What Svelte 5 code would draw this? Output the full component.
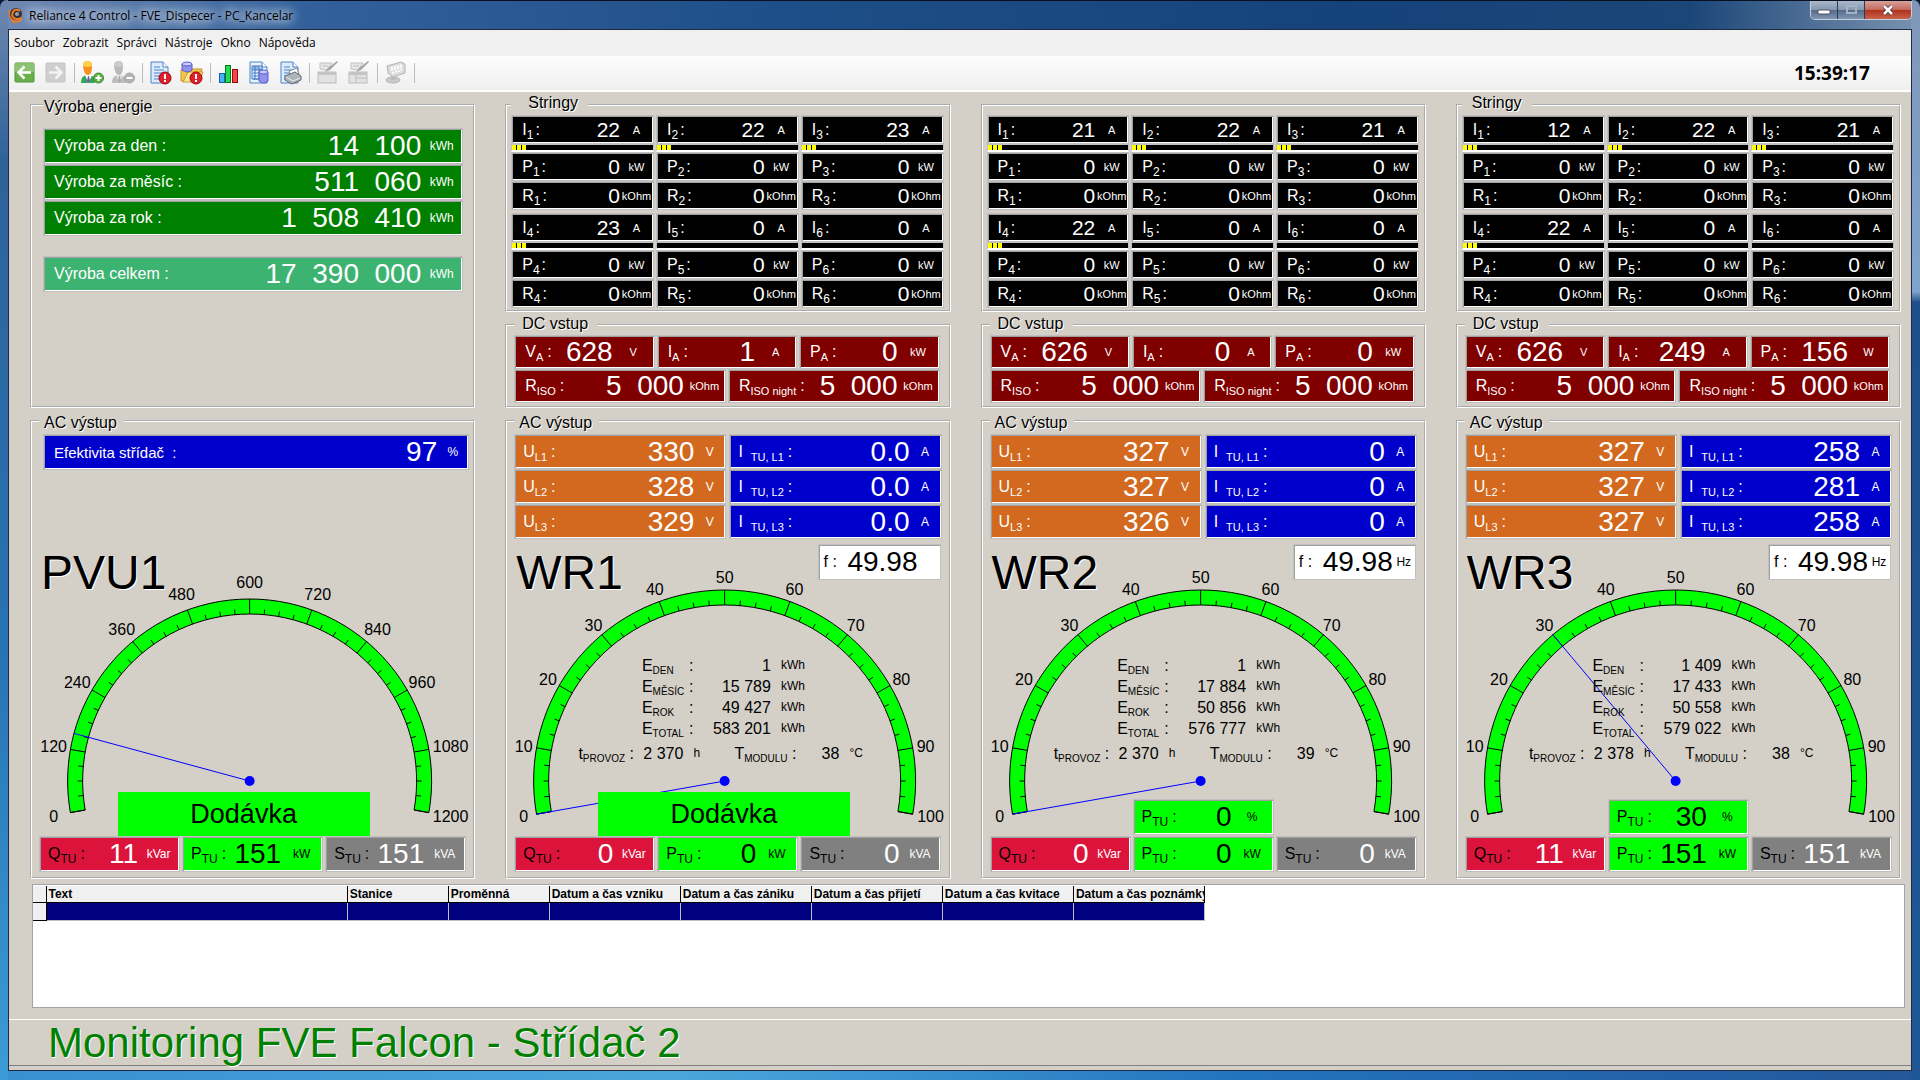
<script lang="ts">
  type Cell = { label: string; sub?: string; value: string; unit: string };

  const menu = ["Soubor", "Zobrazit", "Správci", "Nástroje", "Okno", "Nápověda"];

  const toolbar = [
    { icon: "back", title: "Zpět" },
    { icon: "forward", title: "Vpřed" },
    { icon: "sep" },
    { icon: "login", title: "Přihlásit" },
    { icon: "logout", title: "Odhlásit" },
    { icon: "sep" },
    { icon: "alarms", title: "Aktuální alarmy" },
    { icon: "alarmdb", title: "Historické alarmy" },
    { icon: "sep" },
    { icon: "chart", title: "Grafy" },
    { icon: "table", title: "Tabulky" },
    { icon: "print", title: "Tisk" },
    { icon: "sep" },
    { icon: "edit", title: "Upravit okno" },
    { icon: "edit2", title: "Upravit objekt" },
    { icon: "sep" },
    { icon: "keyboard", title: "Klávesnice" },
    { icon: "sep" },
  ];

  const energy: Cell[] = [
    { label: "Výroba za den :", value: "14 100", unit: "kWh" },
    { label: "Výroba za měsíc :", value: "511 060", unit: "kWh" },
    { label: "Výroba za rok :", value: "1 508 410", unit: "kWh" },
  ];

  const inverters = [
    {
      name: "WR1",
      title: "Stringy",
      indent: true,
      strings: [22, 22, 23, 23, 0, 0],
      dc: [["628", "V"], ["1", "A"], ["0", "kW"]],
      u: ["330", "328", "329"],
      i: ["0.0", "0.0", "0.0"],
      fUnit: "",
      energy: ["1", "15 789", "49 427", "583 201"],
      hours: "2 370",
      temp: "38",
      percent: 0,
      delivery: true,
      q: "0",
      p: "0",
      s: "0",
    },
    {
      name: "WR2",
      title: "",
      indent: false,
      strings: [21, 22, 21, 22, 0, 0],
      dc: [["626", "V"], ["0", "A"], ["0", "kW"]],
      u: ["327", "327", "326"],
      i: ["0", "0", "0"],
      fUnit: "Hz",
      energy: ["1", "17 884", "50 856", "576 777"],
      hours: "2 370",
      temp: "39",
      percent: 0,
      delivery: false,
      q: "0",
      p: "0",
      s: "0",
    },
    {
      name: "WR3",
      title: "Stringy",
      indent: false,
      strings: [12, 22, 21, 22, 0, 0],
      dc: [["626", "V"], ["249", "A"], ["156", "W"]],
      u: ["327", "327", "327"],
      i: ["258", "281", "258"],
      fUnit: "Hz",
      energy: ["1 409", "17 433", "50 558", "579 022"],
      hours: "2 378",
      temp: "38",
      percent: 30,
      delivery: false,
      q: "11",
      p: "151",
      s: "151",
    },
  ];

  const energyNames = ["DEN", "MĚSÍC", "ROK", "TOTAL"];
  const dcNames = ["V", "I", "P"];

  const columns = [
    "Text",
    "Stanice",
    "Proměnná",
    "Datum a čas vzniku",
    "Datum a čas zániku",
    "Datum a čas přijetí",
    "Datum a čas kvitace",
    "Datum a čas poznámky",
  ];

  // the scale spans 200 degrees, starting 10 degrees below the horizontal
  function polar(r: number, t: number) {
    const a = ((190 - t * 200) * Math.PI) / 180;
    return { x: r * Math.cos(a), y: -r * Math.sin(a) };
  }

  function band(outer: number, inner: number) {
    const a = polar(outer, 0);
    const b = polar(outer, 1);
    const c = polar(inner, 1);
    const d = polar(inner, 0);
    return `M${a.x} ${a.y} A${outer} ${outer} 0 1 1 ${b.x} ${b.y} L${c.x} ${c.y} A${inner} ${inner} 0 1 0 ${d.x} ${d.y} Z`;
  }

  function ticks(outer: number, inner: number) {
    return Array.from({ length: 41 }, (_, i) => ({
      a: polar(inner, i / 40),
      b: polar(i % 4 === 0 ? outer : inner + 5, i / 40),
    }));
  }

  function scale(r: number, max: number) {
    return Array.from({ length: 11 }, (_, i) => {
      const text = String((max / 10) * i);
      const long = i > 8 && text.length > 2;
      const p = polar(r, i / 10);
      return { text, x: long ? p.x + 5 : p.x, y: p.y + 6 };
    });
  }

  // a group gap is one digit wide
  function lcd(value: string) {
    return value.replaceAll(" ", "  ");
  }
</script>

{#snippet readout(label, sub, value, unit, cls)}
  <div class="readout {cls}">
    <span class="label">{label}{#if sub}<sub>{sub}</sub><span class="colon">:</span>{/if}</span>
    <span class="value">{lcd(value)}</span>
    <span class="unit">{unit}</span>
  </div>
{/snippet}

{#snippet gauge(outer, labelRadius, max, value)}
  {@const tip = polar(outer, value / max)}
  <svg class="gauge" viewBox="-207 -242 420 297">
    <path d={band(outer, outer - 15)} fill="#00ff00" stroke="#000" />
    {#each ticks(outer, outer - 15) as t}
      <line x1={t.a.x} y1={t.a.y} x2={t.b.x} y2={t.b.y} stroke="#000" />
    {/each}
    {#each scale(labelRadius, max) as l}
      <text x={l.x} y={l.y} text-anchor="middle">{l.text}</text>
    {/each}
    <line x1="0" y1="0" x2={tip.x} y2={tip.y} stroke="#0000ff" />
    <circle r="5" fill="#0000ff" />
  </svg>
{/snippet}

{#snippet power(q, p, s)}
  <div class="three power">
    {@render readout("Q", "TU", q, "kVar", "crimson")}
    {@render readout("P", "TU", p, "kW", "lime")}
    {@render readout("S", "TU", s, "kVA", "gray")}
  </div>
{/snippet}

{#snippet sheet(fill, line)}
  <path d="M2 1h12l5 5v16H2z" fill={fill} stroke={line} />
  <path d="M14 1v5h5" fill="#fff" stroke={line} />
  <path d="M5 6h6M5 9h10M5 12h10M5 15h8M5 18h8" stroke={line} />
{/snippet}

{#snippet alert()}
  <circle cx="16" cy="17" r="6" fill="#e0202a" stroke="#a8000c" />
  <path d="M16 13v5" stroke="#fff" stroke-width="2" />
  <path d="M16 19v2" stroke="#fff" stroke-width="2" />
{/snippet}

{#snippet drum(x, y, w, h)}
  <path d="M{x} {y}v{h}q{w / 2} 4 {w} 0v-{h}z" fill="#8f93ee" stroke="#5a5ec8" />
  <ellipse cx={x + w / 2} cy={y} rx={w / 2} ry="2" fill="#c9cbff" stroke="#5a5ec8" />
{/snippet}

{#snippet icon(name)}
  <svg class="icon" width="24" height="24" viewBox="0 0 24 24" fill="none">
    {#if name === "back"}
      <rect x="2" y="2" width="19" height="19" rx="1" fill="#6cb04c" stroke="#4f9438" />
      <path d="M2 2h19v9H2z" fill="#9ccb85" opacity=".7" />
      <path d="M18 11.5H6M11.5 5.5l-6 6 6 6" stroke="#fff" stroke-width="2.5" />
    {:else if name === "forward"}
      <rect x="2" y="2" width="19" height="19" rx="1" fill="#cfcfcf" stroke="#c4c4c4" />
      <path d="M5 11.5h12M11.5 5.5l6 6-6 6" stroke="#f4f4f4" stroke-width="2.5" />
    {:else if name === "login" || name === "logout"}
      {@const on = name === "login"}
      <path d="M0 22c0-6 3-8 7-8s7 2 7 8z" fill={on ? "#33a852" : "#bdbdbd"} />
      <path d="M4 14l3.5 8 3.5-8z" fill={on ? "#fff" : "#e4e4e4"} />
      <path d="M7 15l-1 5 1.500 2 1.500-2-1-5z" fill={on ? "#7a52b8" : "#a8a8a8"} />
      <path d="M2 5q0-5 4.5-5T11 5q0 9-4 9T2 5z" fill={on ? "#f9901b" : "#b9b9b9"} />
      <path d="M2 5q0-5 4.5-5T11 5q-4 2-9 0z" fill={on ? "#ffd04a" : "#cbcbcb"} />
      <circle cx="17.5" cy="17" r="5" fill={on ? "#5cae45" : "#b2b2b2"} stroke={on ? "#3d8a2b" : "#a5a5a5"} />
      <path d={on ? "M14.500 17h6M17.500 14v6" : "M14.500 17h6"} stroke="#fff" stroke-width="2" />
    {:else if name === "alarms"}
      {@render sheet("#dceafb", "#4a84c4")}
      {@render alert()}
    {:else if name === "alarmdb"}
      <path d="M1 20V9l4-1 1-2h5l1 2h10l-3 13z" fill="#f1c64e" stroke="#c9962a" />
      <path d="M3 21l5-10h15l-4 10z" fill="#ffe79a" stroke="#c9962a" />
      {@render drum(2, 3, 10, 6)}
      {@render alert()}
    {:else if name === "chart"}
      <rect x="2.5" y="12.5" width="5" height="9" fill="#45b4f5" stroke="#1262b8" />
      <rect x="8.5" y="4.5" width="5" height="17" fill="#1fdc50" stroke="#067a20" />
      <rect x="15.5" y="8.5" width="5" height="13" fill="#f0474a" stroke="#a0080e" />
    {:else if name === "table"}
      {@render sheet("#e8f2fd", "#4a84c4")}
      <path d="M4 5h10v13H4zM4 8h10M7 5v13M11 5v13" stroke="#3f78c0" />
      {@render drum(11, 11, 9, 9)}
    {:else if name === "print"}
      {@render sheet("#dceafb", "#4a84c4")}
      <path d="M10 10l8-3 2 6-8 3z" fill="#f6fafd" stroke="#7f8c99" />
      <path d="M6 15l10-4 6 4v4l-9 4-7-4z" fill="#aeb4ba" stroke="#636a72" />
      <path d="M7 16l7 4 7-3" stroke="#e9ecef" />
    {:else if name === "edit" || name === "edit2"}
      <rect x="2" y="11" width="18" height="11" fill="#e2e2e2" stroke="#bcbcbc" />
      <path d="M2 11h18v3H2z" fill="#c4c4c4" />
      <path d="M4 8V2h12l-5 7z" fill="#e8e8e8" stroke="#c0c0c0" />
      <path d="M6 5h6" stroke="#c0c0c0" />
      <path d="M21 0l-9 7-3 4 5-2 8-8z" fill="#a6a6a6" />
      {#if name === "edit2"}
        <path d="M9 14v8M9 17h11" stroke="#bcbcbc" />
      {/if}
    {:else if name === "keyboard"}
      <path d="M3 5L17 1l4 2v9l-12 4-5-4z" fill="#dcdcdc" stroke="#b4b4b4" />
      <path d="M7 7l11-3M7 9l11-3M8 12l10-3" stroke="#fff" stroke-dasharray="2 1" stroke-width="2" />
      <ellipse cx="9" cy="19" rx="7" ry="3" fill="#cacaca" stroke="#b4b4b4" />
      <path d="M7 15h5v4H7z" fill="#bdbdbd" />
    {/if}
  </svg>
{/snippet}

<div class="window">
  <header class="titlebar">
    <svg class="logo" width="16" height="16" viewBox="0 0 16 16">
      <path d="M1 3l5 1 1 9-1 2C2 13 0 8 1 3z" fill="#f07a1c" />
      <circle cx="8" cy="7" r="6" fill="#2c2f36" />
      <path d="M12 4q-5-3-7 1t1 6 7 0" fill="none" stroke="#f07a1c" stroke-width="2" />
      <circle cx="9" cy="7" r="2" fill="#9aa1ab" />
      <path d="M3 13q6 4 11-3v3q-4 4-9 3z" fill="#f07a1c" />
    </svg>
    <span class="caption">Reliance 4 Control - FVE_Dispecer - PC_Kancelar</span>
    <div class="window-buttons">
      <button aria-label="Minimalizovat">
        <svg width="14" height="12"><rect x="1" y="6" width="12" height="4" rx="1" fill="#fff" stroke="#4a5566" /></svg>
      </button>
      <button aria-label="Maximalizovat">
        <svg width="14" height="12"><rect x="3" y="2" width="9" height="7" fill="none" stroke="#a3b1c3" stroke-width="2" /></svg>
      </button>
      <button class="close" aria-label="Zavřít">
        <svg width="14" height="12" fill="none">
          <path d="M3 2l8 8M11 2l-8 8" stroke="#4b3038" stroke-width="4" />
          <path d="M3 2l8 8M11 2l-8 8" stroke="#fff" stroke-width="2.5" />
        </svg>
      </button>
    </div>
  </header>

  <div class="client">
    <nav class="menu">
      {#each menu as item}
        <button>{item}</button>
      {/each}
    </nav>

    <div class="toolbar">
      {#each toolbar as tool}
        {#if tool.icon === "sep"}
          <span class="sep"></span>
        {:else}
          <button aria-label={tool.title}>{@render icon(tool.icon)}</button>
        {/if}
      {/each}
      <time>15:39:17</time>
    </div>

    <main>
      <div class="units">
        <section class="column">
          <fieldset class="energy">
            <legend>Výroba energie</legend>
            {#each energy as e}
              {@render readout(e.label, "", e.value, e.unit, "green")}
            {/each}
            <div class="total">
              {@render readout("Výroba celkem :", "", "17 390 000", "kWh", "seagreen")}
            </div>
          </fieldset>

          <fieldset class="ac">
            <legend>AC výstup</legend>
            <div class="efficiency">
              {@render readout("Efektivita střídač  :", "", "97", "%", "blue small")}
            </div>
            <div class="dial">
              {@render gauge(182, 199, 1200, 151)}
              <h2>PVU1</h2>
              <div class="delivery left">Dodávka</div>
            </div>
            {@render power("11", "151", "151")}
          </fieldset>
        </section>

        {#each inverters as inv}
          <section class="column">
            <fieldset class="strings">
              <legend class="raised" class:indent={inv.indent}>{inv.title}</legend>
              {#each inv.strings as amps, n}
                <div class="string">
                  {@render readout("I", `${n + 1}`, `${amps}`, "A", "black")}
                  <div class="bar"><div class="fill" style="width: {amps ? 14 : 0}px"></div></div>
                  {@render readout("P", `${n + 1}`, "0", "kW", "black")}
                  {@render readout("R", `${n + 1}`, "0", "kOhm", "black")}
                </div>
              {/each}
            </fieldset>

            <fieldset class="dc">
              <legend class="raised">DC vstup</legend>
              <div class="three">
                {#each inv.dc as [value, unit], n}
                  {@render readout(dcNames[n], "A", value, unit, "maroon")}
                {/each}
              </div>
              <div class="two">
                {@render readout("R", "ISO", "5 000", "kOhm", "maroon")}
                {@render readout("R", "ISO night", "5 000", "kOhm", "maroon")}
              </div>
            </fieldset>

            <fieldset class="ac">
              <legend>AC výstup</legend>
              <div class="two phases">
                {#each inv.u as u, n}
                  {@render readout("U", `L${n + 1}`, u, "V", "orange")}
                  {@render readout("I", `TU, L${n + 1}`, inv.i[n], "A", "blue")}
                {/each}
              </div>
              <div class="dial">
                {@render gauge(191, 204, 100, inv.percent)}
                <h2>{inv.name}</h2>
                <div class="frequency">
                  {@render readout("f :", "", "49.98", inv.fUnit, "white")}
                </div>
                <div class="stats">
                  <div class="counters">
                    {#each inv.energy as value, n}
                      <span>E<sub>{energyNames[n]}</sub></span>
                      <span>:</span>
                      <span class="num">{value}</span>
                      <small>kWh</small>
                    {/each}
                  </div>
                  <div class="service">
                    <span>t<sub>PROVOZ</sub> :</span>
                    <span class="num">{inv.hours}</span>
                    <small>h</small>
                    <span>T<sub>MODULU</sub> :</span>
                    <span class="num">{inv.temp}</span>
                    <small>°C</small>
                  </div>
                </div>
                {#if inv.delivery}
                  <div class="delivery">Dodávka</div>
                {:else}
                  <div class="percent three power">
                    {@render readout("P", "TU", `${inv.percent}`, "%", "lime")}
                  </div>
                {/if}
              </div>
              {@render power(inv.q, inv.p, inv.s)}
            </fieldset>
          </section>
        {/each}
      </div>

      <div class="alarms">
        <table>
          <colgroup>
            <col class="mark" />
            <col class="text" />
            <col class="short" />
            <col class="short" />
            <col span="5" class="date" />
          </colgroup>
          <thead>
            <tr>
              <th></th>
              {#each columns as c}
                <th>{c}</th>
              {/each}
            </tr>
          </thead>
          <tbody>
            <tr>
              <th></th>
              {#each columns as _}
                <td></td>
              {/each}
            </tr>
          </tbody>
        </table>
      </div>
    </main>

    <footer>
      <h1>Monitoring FVE Falcon - Střídač 2</h1>
    </footer>
  </div>
</div>

<style>
  :global(body) {
    background: #0a1a33;
  }

  .window {
    box-sizing: border-box;
    min-height: 100vh;
    display: flex;
    flex-direction: column;
    padding: 0 8px 9px;
    border-radius: 7px 7px 0 0;
    font-family: "Liberation Sans", Arial, sans-serif;
    color: #000;
    background:
      linear-gradient(#8096b8, #7fa3cc 27%, #1d4f8c 28%, #1f5796) right / 9px 100% no-repeat,
      linear-gradient(#6f87b0, #2f6299 15%, #2773b4 60%, #3c9bd6) left / 8px 100% no-repeat,
      linear-gradient(90deg, #3a8fd0, #4ba6dc 35%, #2273bd 65%, #24579a) bottom / 100% 9px no-repeat,
      linear-gradient(90deg, #7089b3, #33609b 16%, #1f4f88 40%, #15427a 70%, #1b4678 88%, #7b93b0);
  }

  button {
    margin: 0;
    padding: 0;
    border: none;
    background: none;
    font: inherit;
    color: inherit;
  }

  .titlebar {
    display: flex;
    align-items: center;
    height: 28px;
    border-top: 1px solid #0a1020;
    background: radial-gradient(closest-side, #a9cbea 60%, transparent) calc(100% - 30px) 30px / 240px 24px no-repeat;
  }

  .logo {
    margin-right: 5px;
  }

  .caption {
    flex: 1;
    font: 12px "Open Sans", "Noto Sans", sans-serif;
    text-shadow: 0 0 8px #fff, 0 0 12px #cfdcec, 0 0 16px #cfdcec;
  }

  .window-buttons {
    align-self: flex-start;
    display: flex;
    border: 1px solid #c4d0de;
    border-top: none;
    border-radius: 0 0 5px 5px;
    overflow: hidden;
  }

  .window-buttons button {
    width: 27px;
    height: 18px;
    display: flex;
    align-items: center;
    justify-content: center;
    border-right: 1px solid #2b3b52;
    background: linear-gradient(#a9b8cb, #8798b0 48%, #54698a 50%, #7f95b0);
  }

  .window-buttons .close {
    width: 46px;
    border-right: none;
    background: linear-gradient(#d9a198, #c56a5c 48%, #b0301c 50%, #c9644a);
  }

  .client {
    flex: 1;
    display: flex;
    flex-direction: column;
    border: 1px solid #1d2c40;
    background: #d4d0c8;
  }

  .menu {
    display: flex;
    height: 26px;
    padding-left: 1px;
    background: #f0f0f0;
  }

  .menu button {
    padding: 0 4px 2px;
    font: 12px "Open Sans", "Noto Sans", sans-serif;
  }

  .toolbar {
    display: flex;
    align-items: center;
    height: 34px;
    border-bottom: 2px solid #fff;
    background: linear-gradient(#fdfdfd, #efefef);
  }

  .toolbar button {
    width: 31px;
    height: 30px;
  }

  .icon {
    display: block;
    margin: 0 auto;
  }

  .sep {
    width: 1px;
    height: 20px;
    margin: 0 2px 0 3px;
    background: #bcbcbc;
  }

  time {
    margin: 0 41px 0 auto;
    font: bold 19px "Open Sans", "Noto Sans", sans-serif;
  }

  main {
    flex: 1;
    padding: 3px 6px 11px 21px;
  }

  .units {
    display: grid;
    grid-template-columns: repeat(4, minmax(0, 1fr));
    gap: 30px;
    padding-right: 4px;
  }

  .column {
    display: flex;
    flex-direction: column;
    gap: 3px;
  }

  fieldset {
    min-width: 0;
    margin: 0;
    padding: 0 7px 5px;
    border: 2px groove #fff;
  }

  legend {
    height: 20px;
    padding: 0 7px 0 5px;
    font-size: 16px;
    line-height: 24px;
    text-shadow: 1px 1px #fff;
  }

  legend:empty {
    padding: 0;
  }

  .raised {
    padding: 0 10px 0 8px;
    line-height: 17px;
  }

  .raised:empty {
    padding: 0;
  }

  .strings .raised {
    padding-left: 10px;
    line-height: 15px;
  }

  .strings .raised:empty {
    padding: 0;
  }

  .strings .indent {
    padding-left: 17px;
  }

  .readout {
    box-sizing: border-box;
    display: flex;
    align-items: center;
    height: 36px;
    border: 1px solid #c0c0c0;
    box-shadow: inset 1px 1px #a0a0a0, inset -1px -1px #fff;
    color: #fff;
    white-space: pre;
  }

  .label {
    padding-left: 8px;
    font-size: 16px;
  }

  sub {
    font-size: 11px;
    line-height: 0;
    vertical-align: -4px;
  }

  .colon {
    padding-left: 4px;
  }

  .value {
    margin-left: auto;
    font-size: 28px;
    line-height: 32px;
  }

  .unit {
    width: 41px;
    font-size: 12px;
    text-align: center;
  }

  .green {
    background: #008000;
  }

  .seagreen {
    background: #3cb371;
  }

  .maroon {
    height: 34px;
    background: #800000;
  }

  .maroon .unit {
    font-size: 11px;
  }

  .orange {
    background: #d2691e;
  }

  .blue {
    background: #0000cd;
  }

  .blue sub {
    padding-left: 8px;
  }

  .small .label {
    padding-left: 10px;
    font-size: 15px;
  }

  .blue .unit,
  .orange .unit {
    width: 31px;
  }

  .crimson {
    background: #dc143c;
  }

  .lime {
    background: #00ff00;
    color: #000;
  }

  .gray {
    background: #808080;
  }

  .crimson .label,
  .gray .label {
    color: #000;
  }

  .white {
    background: #fff;
    color: #000;
  }

  .white .label {
    padding-left: 5px;
  }

  .white .unit {
    width: 22px;
  }

  .black {
    height: 29px;
    background: #000;
  }

  .black .label {
    padding-left: 10px;
  }

  .black sub {
    font-size: 12px;
  }

  .black .colon {
    padding-left: 2px;
  }

  .black .value {
    font-size: 21px;
    line-height: 24px;
  }

  .black .unit {
    width: 33px;
    font-size: 11px;
  }

  .energy {
    flex: 1;
    padding: 13px 10px 0 11px;
  }

  .energy legend {
    padding-left: 1px;
  }

  .energy .label {
    padding-left: 10px;
  }

  .total {
    margin-top: 20px;
  }

  .strings {
    display: grid;
    grid-template-columns: repeat(3, 1fr);
    gap: 3px 2px;
    padding: 0 5px 2px 4px;
  }

  .bar {
    height: 5px;
    border: 1px solid #c0c0c0;
    border-bottom: 2px solid #fff;
    background: #000;
  }

  .fill {
    height: 5px;
    background: repeating-linear-gradient(90deg, #ff0 0 4px, #000 4px 5px);
  }

  .dc {
    padding: 0 9px 3px 7px;
  }

  .dc .label {
    padding-left: 10px;
  }

  .three {
    display: grid;
    grid-template-columns: repeat(3, 1fr);
    gap: 2px;
  }

  .two {
    display: grid;
    grid-template-columns: repeat(2, 1fr);
    gap: 0 2px;
  }

  .power sub {
    font-size: 12px;
  }

  .ac {
    padding-top: 3px;
  }

  .phases {
    gap: 0 3px;
  }

  .phases .readout {
    height: 35px;
  }

  .efficiency {
    margin: 0 -3px 69px 4px;
  }

  .dial {
    position: relative;
    height: 297px;
  }

  .gauge {
    display: block;
    width: 100%;
    height: 297px;
    overflow: visible;
    font-size: 16px;
  }

  h2 {
    position: absolute;
    top: 10px;
    left: 2px;
    margin: 0;
    font-size: 48px;
    font-weight: normal;
    line-height: 48px;
    text-shadow: 1px 1px #fff;
  }

  .frequency {
    position: absolute;
    top: 5px;
    right: 1px;
    width: 123px;
  }

  .stats {
    position: absolute;
    inset: 116px 10px auto 0;
    display: flex;
    flex-direction: column;
    align-items: center;
    gap: 4px;
    font-size: 16px;
    line-height: 21px;
  }

  .stats sub {
    font-size: 10px;
    vertical-align: -3px;
  }

  .stats small {
    padding-left: 10px;
    font-size: 12px;
  }

  .counters {
    display: grid;
    grid-template-columns: 47px 8px 74px 33px;
    white-space: nowrap;
  }

  .service {
    display: grid;
    grid-template-columns: 54px 51px 51px 60px 45px 28px;
    white-space: nowrap;
  }

  .num {
    text-align: right;
  }

  .delivery {
    position: absolute;
    inset: auto 8px 0 0;
    width: 252px;
    margin: 0 auto;
    background: #00ff00;
    font-size: 27px;
    line-height: 44px;
    text-align: center;
  }

  .left {
    right: 18px;
  }

  .percent {
    position: absolute;
    inset: auto 0 1px;
  }

  .percent .readout {
    grid-column: 2;
  }

  .alarms {
    height: 122px;
    margin: 5px 0 0 2px;
    border: 1px solid #a0a4aa;
    background: #fff;
  }

  table {
    width: 1172px;
    margin: 1px 0;
    border-collapse: collapse;
    table-layout: fixed;
    font-size: 12px;
  }

  .mark {
    width: 13px;
  }

  .text {
    width: 301px;
  }

  .short {
    width: 101px;
  }

  .date {
    width: 131px;
  }

  th {
    height: 16px;
    padding: 0 0 0 2px;
    border-right: 1px solid #000;
    border-bottom: 1px solid #000;
    background: #f0f0f0;
    line-height: 16px;
    text-align: left;
    white-space: nowrap;
    overflow: hidden;
  }

  td {
    height: 17px;
    padding: 0;
    border-right: 1px solid #c0c0c0;
    border-bottom: 1px solid #c0c0c0;
    background: #000080;
  }

  footer {
    height: 45px;
    margin-bottom: 4px;
    border-top: 1px solid #fff;
    border-bottom: 1px solid #808080;
  }

  h1 {
    margin: 0 0 0 39px;
    color: #008000;
    font-size: 42px;
    font-weight: normal;
    line-height: 45px;
    text-shadow: 1px 1px #fff;
  }
</style>
